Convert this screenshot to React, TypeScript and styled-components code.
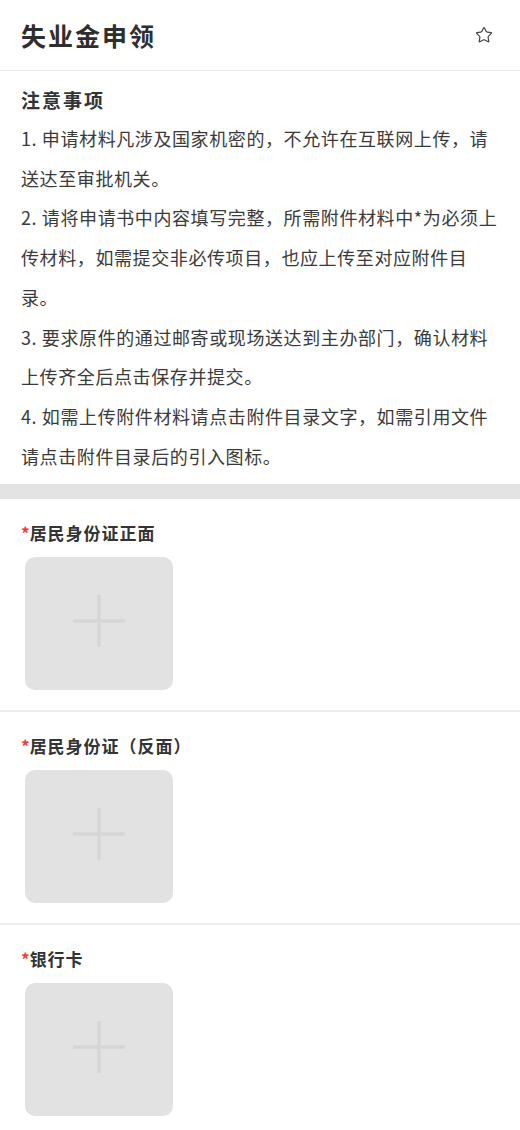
import React, { FC } from 'react';
import styled, { createGlobalStyle } from 'styled-components';
import { Star } from 'lucide-react';

// Styles
const GlobalStyle = createGlobalStyle`
  html, body {
    margin: 0;
    padding: 0;
    background: #ffffff;
  }

  body {
    font-family: "Noto Sans CJK SC", "Noto Sans", sans-serif;
    color: #333333;
  }
`;

const Page = styled.div`
  width: 520px;
  background: #ffffff;
`;

const Header = styled.header`
  display: flex;
  align-items: center;
  justify-content: space-between;
  height: 70px;
  padding: 0 27px 0 21px;
  border-bottom: 1px solid #e6e6e6;
`;

const Title = styled.h1`
  margin: 0;
  font-size: 25px;
  font-weight: 700;
  letter-spacing: 2px;
  line-height: 34px;
  color: #2e2e2e;
`;

const StarButton = styled.button`
  display: flex;
  align-items: center;
  justify-content: center;
  padding: 0;
  border: none;
  background: transparent;
  color: #444444;
  cursor: pointer;
`;

const Notice = styled.section`
  padding: 15px 21px 8px;
`;

const NoticeTitle = styled.h2`
  margin: 0 0 5px;
  font-size: 19px;
  font-weight: 700;
  letter-spacing: 2px;
  line-height: 28px;
  color: #333333;
`;

const NoticeText = styled.p`
  margin: 0;
  font-size: 18px;
  letter-spacing: 0.6px;
  line-height: 39.7px;
  color: #3a3a3a;
`;

const Band = styled.div`
  height: 15px;
  background: #e3e3e3;
`;

const UploadSection = styled.section`
  padding: 22px 21px 20px;
  border-bottom: 2px solid #eeeeee;
`;

const Label = styled.div`
  font-size: 17px;
  font-weight: 700;
  letter-spacing: 1px;
  line-height: 24px;
  color: #333333;
`;

const Required = styled.span`
  color: #f23c3c;
  letter-spacing: 0;
`;

const UploadBox = styled.button`
  display: flex;
  align-items: center;
  justify-content: center;
  width: 148px;
  height: 133px;
  margin: 12px 0 0 4px;
  padding: 0 0 5px;
  border: none;
  border-radius: 10px;
  background: #e2e2e2;
  cursor: pointer;
`;

// Data
const notices = [
  '1. 申请材料凡涉及国家机密的，不允许在互联网上传，请送达至审批机关。',
  '2. 请将申请书中内容填写完整，所需附件材料中*为必须上传材料，如需提交非必传项目，也应上传至对应附件目录。',
  '3. 要求原件的通过邮寄或现场送达到主办部门，确认材料上传齐全后点击保存并提交。',
  '4. 如需上传附件材料请点击附件目录文字，如需引用文件请点击附件目录后的引入图标。',
];

const uploads = ['居民身份证正面', '居民身份证（反面）', '银行卡'];

// Components
const PlusIcon: FC = () => (
  <svg width="56" height="56" viewBox="0 0 56 56" fill="none">
    <path d="M28 2v52M2 28h52" stroke="#d6d6d6" strokeWidth="3.5" />
  </svg>
);

const UploadItem: FC<{ label: string }> = ({ label }) => (
  <UploadSection>
    <Label>
      <Required>*</Required>
      {label}
    </Label>
    <UploadBox type="button" aria-label={`上传${label}`}>
      <PlusIcon />
    </UploadBox>
  </UploadSection>
);

const App: FC = () => (
  <>
    <GlobalStyle />
    <Page>
      <Header>
        <Title>失业金申领</Title>
        <StarButton type="button" aria-label="收藏">
          <Star size={18} strokeWidth={1.6} />
        </StarButton>
      </Header>

      <Notice>
        <NoticeTitle>注意事项</NoticeTitle>
        {notices.map((text) => (
          <NoticeText key={text}>{text}</NoticeText>
        ))}
      </Notice>

      <Band />

      {uploads.map((label) => (
        <UploadItem key={label} label={label} />
      ))}
    </Page>
  </>
);

export default App;
